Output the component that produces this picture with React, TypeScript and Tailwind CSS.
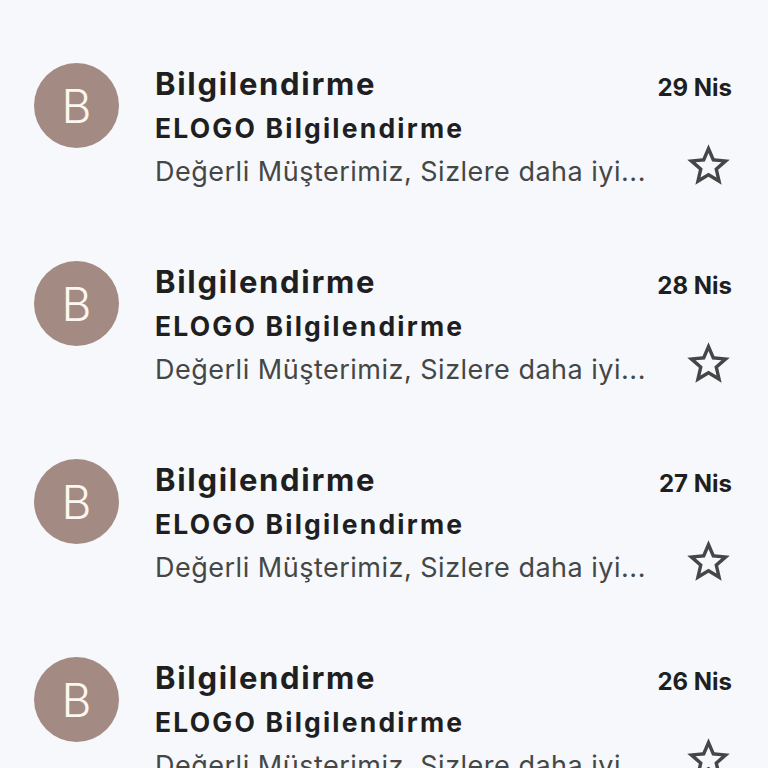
const mails = [
  { id: 1, date: "29 Nis" },
  { id: 2, date: "28 Nis" },
  { id: 3, date: "27 Nis" },
  { id: 4, date: "26 Nis" },
];

function StarIcon() {
  return (
    <svg viewBox="0 0 24 24" className="w-[51px] h-[51px]" fill="#444746">
      <path d="M22 9.24l-7.19-.62L12 2 9.19 8.63 2 9.24l5.46 4.73L5.82 21 12 17.27 18.18 21l-1.63-7.03L22 9.24zM12 15.4l-3.76 2.27 1-4.28-3.32-2.88 4.38-.38L12 6.1l1.71 4.04 4.38.38-3.32 2.88 1 4.28L12 15.4z" />
    </svg>
  );
}

export default function App() {
  return (
    <div
      className="h-screen w-full overflow-hidden bg-[#f6f8fc] pt-[63px]"
      style={{ fontFamily: "Inter, 'Noto Sans', sans-serif" }}
    >
      {mails.map((mail) => (
        <div key={mail.id} className="flex h-[198px] items-start pl-[34px] pr-[36px]">
          <div className="flex h-[85px] w-[85px] shrink-0 items-center justify-center rounded-full bg-[#a38b83]">
            <span className="text-[46px] font-light leading-none text-[#fdf7ef]">B</span>
          </div>
          <div className="ml-[36px] mt-[2px] min-w-0 flex-1">
            <div className="text-[31px] font-bold leading-[37px] tracking-[1.7px] text-[#1f1f1f]">
              Bilgilendirme
            </div>
            <div className="mt-[9px] text-[26.5px] font-bold leading-[34px] tracking-[2.2px] text-[#1f1f1f]">
              ELOGO Bilgilendirme
            </div>
            <div className="mt-[9px] whitespace-nowrap overflow-hidden text-[27px] leading-[36px] tracking-[0.5px] text-[#444746]">
              Değerli Müşterimiz, Sizlere daha iyi...
            </div>
          </div>
          <div className="ml-3 flex shrink-0 flex-col items-end">
            <div className="mt-[10px] text-[24px] font-bold leading-[30px] text-[#1f1f1f]">{mail.date}</div>
            <div className="mt-[37px] mr-[-2px]">
              <StarIcon />
            </div>
          </div>
        </div>
      ))}
    </div>
  );
}
